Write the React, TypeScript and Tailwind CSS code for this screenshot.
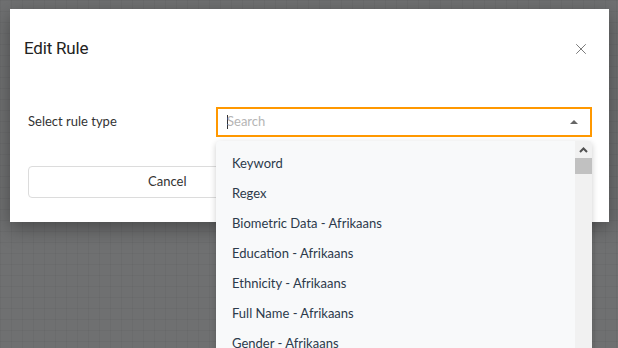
import { X } from "lucide-react";

const options = [
  "Keyword",
  "Regex",
  "Biometric Data - Afrikaans",
  "Education - Afrikaans",
  "Ethnicity - Afrikaans",
  "Full Name - Afrikaans",
  "Gender - Afrikaans",
];

export default function App() {
  return (
    <div className="h-[348px] w-[618px] overflow-hidden bg-[#6f7071] bg-[linear-gradient(rgba(0,0,0,0.035)_1px,transparent_1px),linear-gradient(90deg,rgba(0,0,0,0.035)_1px,transparent_1px)] bg-[size:11px_11px] pt-[9px] pl-[10px] font-['Lato',sans-serif]">
      {/* modal */}
      <div className="relative w-[599px] bg-white pb-[24px] shadow-[0_6px_18px_rgba(0,0,0,0.35)]">
        <div className="flex h-[78px] items-center justify-between pl-[14px] pr-[19px] pt-[2px]">
          <h2 className="font-['Roboto',sans-serif] text-[17px] tracking-[-0.2px] text-[#222]">Edit Rule</h2>
          <button className="text-[#777]">
            <X size={18} strokeWidth={1.3} />
          </button>
        </div>

        <div className="mt-[20px] flex items-center pl-[18px] pr-[17px]">
          <label className="w-[188px] text-[13px] text-[#333]">Select rule type</label>
          <div className="relative flex-1">
            <div className="flex h-[30px] items-center justify-between border-2 border-[#ff9800] pl-[9px] pr-[12px]">
              <span className="flex items-center text-[13px] text-[#b5b5b5]">
                <span className="mr-[-1px] h-[14px] w-px bg-[#333]" />
                Search
              </span>
              <span className="h-0 w-0 border-x-[4px] border-b-[4px] border-x-transparent border-b-[#666]" />
            </div>

            {/* dropdown */}
            <div className="absolute left-0 right-0 top-[34px] z-10 flex h-[230px] overflow-hidden rounded-t-[4px] bg-[#f8f9fa] shadow-[0_2px_6px_rgba(0,0,0,0.2)]">
              <ul className="flex-1 pt-[8px]">
                {options.map((o) => (
                  <li key={o} className="flex h-[30px] items-center pl-[16px] text-[13px] text-[#2c3a4b]">
                    {o}
                  </li>
                ))}
              </ul>
              <div className="w-[17px] bg-[#f1f1f1]">
                <div className="flex h-[17px] items-center justify-center">
                  <svg width="9" height="6" viewBox="0 0 9 6">
                    <path d="M1 5 L4.5 1.5 L8 5" fill="none" stroke="#505050" strokeWidth="2" />
                  </svg>
                </div>
                <div className="h-[16px] bg-[#c1c1c1]" />
              </div>
            </div>
          </div>
        </div>

        <div className="mt-[29px] flex gap-[8px] px-[18px]">
          <button className="h-[32px] flex-1 rounded-[4px] border border-[#dcdcdc] text-[13px] text-[#333]">
            Cancel
          </button>
          <button className="h-[32px] flex-1 rounded-[4px] bg-[#ff9800] text-[13px] text-white">
            Save
          </button>
        </div>
      </div>
    </div>
  );
}
